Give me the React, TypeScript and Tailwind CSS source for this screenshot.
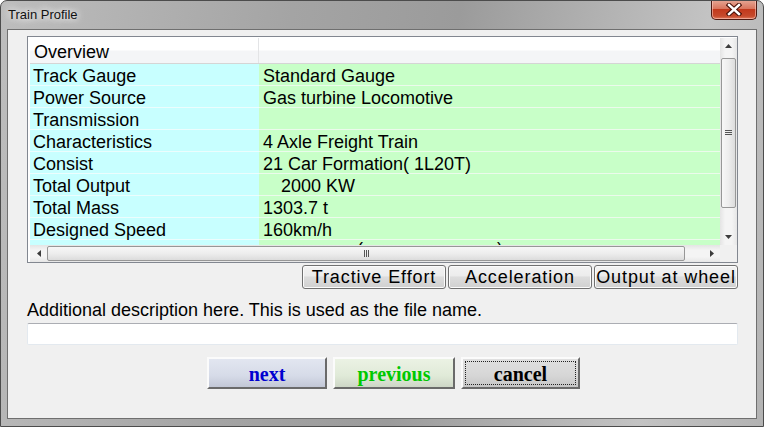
import React from 'react';

const rows: { label: string; value: string; indent?: boolean }[] = [
  { label: 'Track Gauge', value: 'Standard Gauge' },
  { label: 'Power Source', value: 'Gas turbine Locomotive' },
  { label: 'Transmission', value: '' },
  { label: 'Characteristics', value: '4 Axle Freight Train' },
  { label: 'Consist', value: '21 Car Formation( 1L20T)' },
  { label: 'Total Output', value: '2000 KW', indent: true },
  { label: 'Total Mass', value: '1303.7 t' },
  { label: 'Designed Speed', value: '160km/h' },
];

const Arrow = ({ dir }: { dir: 'up' | 'down' | 'left' | 'right' }) => {
  const pts = {
    up: '0,4 7,4 3.5,0',
    down: '0,0 7,0 3.5,4',
    left: '4,0 4,7 0,3.5',
    right: '0,0 0,7 4,3.5',
  }[dir];
  const vertical = dir === 'up' || dir === 'down';
  return (
    <svg width={vertical ? 7 : 4} height={vertical ? 4 : 7} viewBox={vertical ? '0 0 7 4' : '0 0 4 7'}>
      <polygon points={pts} fill="#3c3c3c" />
    </svg>
  );
};

const CloseIcon = () => (
  <svg width="16" height="13" viewBox="0 0 16 13">
    <path d="M3 2 L13 11 M13 2 L3 11" stroke="#4a1208" strokeWidth="4.6" strokeLinecap="square" />
    <path d="M3 2 L13 11 M13 2 L3 11" stroke="#ffffff" strokeWidth="2.4" strokeLinecap="square" />
  </svg>
);

const TabButton = ({ children }: { children: React.ReactNode }) => (
  <button className="w-[144px] h-[24px] flex items-center justify-center whitespace-nowrap overflow-hidden border border-[#707070] rounded-[3px] bg-[linear-gradient(#f3f3f3,#ececec_45%,#dddddd_50%,#d0d0d0)] shadow-[inset_0_0_0_1px_#fbfbfb] text-[18px] tracking-[0.9px] leading-none text-black">
    {children}
  </button>
);

export default function App() {
  return (
    <div className="w-[764px] h-[427px] flex flex-col rounded-t-[7px] border border-[#4c4c4c] bg-[linear-gradient(100deg,#bdbdbd,#a4a4a4_35%,#9b9b9b_55%,#c3c3c3_85%,#b3b3b3)] font-['Liberation_Sans',Arial,sans-serif] text-black overflow-hidden">
      {/* title bar */}
      <div className="h-[28px] flex items-start justify-between pl-[7px] pr-[6px] shrink-0">
        <span className="mt-[6px] text-[13px] leading-[16px] text-[#111] [text-shadow:0_0_6px_#f4f4f4,0_0_10px_#ffffff]">
          Train Profile
        </span>
        <div className="w-[46px] h-[20px] -mt-px flex items-center justify-center rounded-b-[5px] border border-t-0 border-[#4d1a12] bg-[linear-gradient(#e6a896,#d9765e_45%,#c2391c_50%,#c64a2c_85%,#e07a5c)] shadow-[inset_0_0_0_1px_rgba(255,210,200,0.55)]">
          <CloseIcon />
        </div>
      </div>

      {/* client area */}
      <div className="flex-1 mx-[6px] mb-[7px] border border-[#6f6f6f] bg-[#f0f0f0] pl-[19px] pr-[18px] pt-[6px] flex flex-col">
        {/* grid */}
        <div className="h-[227px] border border-[#828790] bg-white pl-[2px] pt-px flex flex-col">
          <div className="flex h-[207px]">
            <div className="flex-1 overflow-hidden text-[18px]">
              <div className="flex h-[26px] border-b border-[#d5d5d5] bg-[linear-gradient(#ffffff,#ffffff_48%,#f4f5f7_52%,#f4f5f7)]">
                <div className="w-[229px] border-r border-[#e3e4e6] flex items-center pl-[4px] pt-[4px]">Overview</div>
                <div className="flex-1" />
              </div>
              {rows.map((r) => (
                <div key={r.label} className="flex h-[22px]">
                  <div className="w-[229px] bg-[#c8ffff] border-b border-[#ecfdfd] flex items-center pl-[3px] pt-[4px]">
                    {r.label}
                  </div>
                  <div className="flex-1 bg-[#c8ffc8] border-b border-[#ecfaec] flex items-center pl-[4px] pt-[4px]">
                    <span className={r.indent ? 'pl-[18px]' : ''}>{r.value}</span>
                  </div>
                </div>
              ))}
              <div className="flex h-[22px]">
                <div className="w-[229px] bg-[#c8ffff]" />
                <div className="flex-1 bg-[#c8ffc8] flex items-start pl-[4px] leading-[18px]">
                  <span className="pl-[94px]">(</span>
                  <span className="pl-[134px]">)</span>
                </div>
              </div>
            </div>
            {/* vertical scrollbar */}
            <div className="w-[17px] flex flex-col bg-[linear-gradient(to_right,#e4e4e4,#f4f4f4_30%,#f4f4f4_70%,#e6e6e6)]">
              <div className="h-[17px] flex items-center justify-center">
                <Arrow dir="up" />
              </div>
              <div className="flex-1 pt-[3px] pb-[21px] px-px">
                <div className="h-[150px] rounded-[2px] border border-[#979797] bg-[linear-gradient(to_right,#f7f7f7,#ededed_50%,#dcdcdc)] flex flex-col items-center justify-center gap-[1px]">
                  <div className="w-[7px] h-px bg-[#555]" />
                  <div className="w-[7px] h-px bg-[#555]" />
                  <div className="w-[7px] h-px bg-[#555]" />
                </div>
              </div>
              <div className="h-[17px] flex items-center justify-center">
                <Arrow dir="down" />
              </div>
            </div>
          </div>
          {/* horizontal scrollbar */}
          <div className="flex h-[17px]">
            <div className="flex-1 flex bg-[linear-gradient(#e4e4e4,#f4f4f4_30%,#f4f4f4_70%,#e6e6e6)]">
              <div className="w-[17px] flex items-center justify-center">
                <Arrow dir="left" />
              </div>
              <div className="flex-1 py-px pr-[18px]">
                <div className="h-full rounded-[2px] border border-[#979797] bg-[linear-gradient(#f7f7f7,#ededed_50%,#dcdcdc)] flex items-center justify-center gap-[1px]">
                  <div className="w-px h-[7px] bg-[#555]" />
                  <div className="w-px h-[7px] bg-[#555]" />
                  <div className="w-px h-[7px] bg-[#555]" />
                </div>
              </div>
              <div className="w-[17px] flex items-center justify-center">
                <Arrow dir="right" />
              </div>
            </div>
            <div className="w-[17px] bg-[#f0f0f0]" />
          </div>
        </div>

        {/* chart buttons */}
        <div className="flex justify-end gap-[2px] mt-[2px]">
          <TabButton>Tractive Effort</TabButton>
          <TabButton>Acceleration</TabButton>
          <TabButton>Output at wheel</TabButton>
        </div>

        <div className="mt-[11px] h-[20px] leading-[20px] text-[18px]">
          Additional description here. This is used as the file name.
        </div>
        <input
          className="mt-[3px] h-[22px] w-full bg-white border border-[#e3e9ef] border-t-[#abadb3] rounded-[2px] outline-none"
          defaultValue=""
        />

        {/* dialog buttons */}
        <div className="flex gap-[6px] ml-[180px] mt-[12px] font-['Liberation_Serif','Times_New_Roman',serif] font-bold text-[20px]">
          <button className="w-[120px] h-[32px] border-2 border-t-[#fbfbfb] border-l-[#fbfbfb] border-b-[#6a6a6a] border-r-[#6a6a6a] bg-[linear-gradient(#e2e6f0,#d6dbe8_60%,#c2c7d6)] text-[#0000d0]">
            next
          </button>
          <button className="w-[122px] h-[32px] border-2 border-t-[#fbfbfb] border-l-[#fbfbfb] border-b-[#6a6a6a] border-r-[#6a6a6a] bg-[linear-gradient(#ebf2e4,#e0ead8_60%,#cdd6c6)] text-[#00c800]">
            previous
          </button>
          <button className="relative w-[119px] h-[32px] border-2 border-t-[#fbfbfb] border-l-[#fbfbfb] border-b-[#6a6a6a] border-r-[#6a6a6a] bg-[linear-gradient(#e0e0e0,#d6d6d6_60%,#c6c6c6)] text-black">
            <span className="absolute inset-[2px] border border-dotted border-[#222]" />
            cancel
          </button>
        </div>
      </div>
    </div>
  );
}
